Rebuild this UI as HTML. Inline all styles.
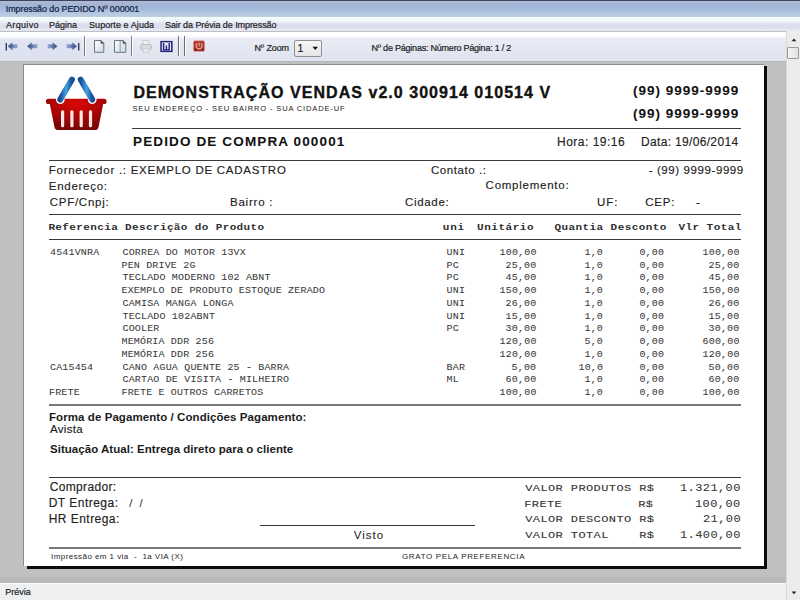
<!DOCTYPE html>
<html><head><meta charset="utf-8">
<style>
*{margin:0;padding:0;box-sizing:border-box}
html,body{width:800px;height:600px;overflow:hidden;background:#c0c0c0;font-family:"Liberation Sans",sans-serif;position:relative}
.t{position:absolute;white-space:pre;line-height:1}
.b{position:absolute}
.hl{position:absolute;height:1px;background:#3a3a3a}
</style></head><body>
<!-- title bar -->
<div class="b" style="left:0;top:0;width:800px;height:17px;background:linear-gradient(#3a4560 0,#3a4560 1px,#b0b9d6 1.5px,#a4b5d3 4px,#a2badf 9px,#b0c4e2 12px,#bccfe0 16.5px)"></div>
<div class="b" style="left:0;top:17px;width:800px;height:14px;background:linear-gradient(#f7fdfe 0,#eef4fb 30%,#dcdeee 55%,#dfe1f0 80%,#e9ebf3 100%)"></div>
<div class="b" style="left:0;top:31px;width:800px;height:1px;background:#bcc0c6"></div>
<!-- toolbar -->
<div class="b" style="left:0;top:32px;width:786px;height:29px;background:linear-gradient(#ffffff 0,#fbfcfd 16%,#e9ecf5 22%,#dfe3ef 100%)"></div>
<div class="b" style="left:0;top:61px;width:786px;height:1px;background:#b4b6bb"></div>
<div class="b" style="left:0;top:577px;width:786px;height:6px;background:#b9b9b9"></div>
<!-- scrollbar -->
<div class="b" style="left:786px;top:31px;width:14px;height:569px;background:#ececec;border-left:1px solid #d8d8d8"></div>
<!-- page shadow + page -->
<div class="b" style="left:763px;top:66px;width:4px;height:503px;background:#0c0c0c"></div>
<div class="b" style="left:27px;top:565px;width:740px;height:4px;background:#0c0c0c"></div>
<div class="b" style="left:23px;top:64px;width:741px;height:502px;background:#fff;border-left:1px solid #8c8c8c;border-top:1px solid #8c8c8c"></div>
<!-- status bar -->
<div class="b" style="left:0;top:583px;width:786px;height:17px;background:#eeeff1;border-top:1px solid #fbfbfb"></div>
<!-- lines -->
<div class="hl" style="left:132px;top:128px;width:609px"></div>
<div class="hl" style="left:49px;top:160px;width:692px"></div>
<div class="hl" style="left:49px;top:214px;width:692px"></div>
<div class="hl" style="left:49px;top:239px;width:692px"></div>
<div class="hl" style="left:49px;top:404px;width:692px;height:2px;background:#777"></div>
<div class="hl" style="left:49px;top:477px;width:692px"></div>
<div class="hl" style="left:260px;top:525px;width:215px"></div>
<div class="hl" style="left:49px;top:547px;width:692px;height:2px;background:#777"></div>

<div class="b" style="left:0;top:38.5px;width:81px;height:18px;background:#dcdff0;opacity:0.6"></div>
<!-- toolbar icons -->
<svg class="b" style="left:0;top:31px" width="786" height="30" viewBox="0 31 786 30">
 <defs>
  <linearGradient id="arrL" x1="0" y1="0" x2="1" y2="0"><stop offset="0" stop-color="#34447e"/><stop offset="0.45" stop-color="#5a70aa"/><stop offset="1" stop-color="#a6b6dc"/></linearGradient><linearGradient id="arrR" x1="1" y1="0" x2="0" y2="0"><stop offset="0" stop-color="#34447e"/><stop offset="0.45" stop-color="#5a70aa"/><stop offset="1" stop-color="#a6b6dc"/></linearGradient>
  <linearGradient id="pg" x1="0" y1="0" x2="1" y2="1"><stop offset="0" stop-color="#ffffff"/><stop offset="1" stop-color="#c9dbe6"/></linearGradient>
  <linearGradient id="pw" x1="0" y1="0" x2="0" y2="1"><stop offset="0" stop-color="#b04038"/><stop offset="1" stop-color="#8a2622"/></linearGradient>
 </defs>
 <!-- first -->
 <rect x="5.6" y="43" width="1.4" height="7.5" fill="#2c3a66"/>
 <path d="M8 46.3 L12.2 42.8 L12.2 44.8 L17 44.8 L17 47.8 L12.2 47.8 L12.2 49.8 Z" fill="url(#arrL)" stroke="#5a6ca0" stroke-width="0.5"/>
 <!-- prev -->
 <path d="M27.3 46.3 L31.7 42.8 L31.7 44.8 L37 44.8 L37 47.8 L31.7 47.8 L31.7 49.8 Z" fill="url(#arrL)" stroke="#5a6ca0" stroke-width="0.5"/>
 <!-- next -->
 <path d="M57.2 46.3 L52.8 42.8 L52.8 44.8 L48 44.8 L48 47.8 L52.8 47.8 L52.8 49.8 Z" fill="url(#arrR)" stroke="#5a6ca0" stroke-width="0.5"/>
 <!-- last -->
 <path d="M76.8 46.3 L72.4 42.8 L72.4 44.8 L67 44.8 L67 47.8 L72.4 47.8 L72.4 49.8 Z" fill="url(#arrR)" stroke="#5a6ca0" stroke-width="0.5"/>
 <rect x="78" y="43" width="1.4" height="7.5" fill="#2c3a66"/>
 <!-- separators -->
 <rect x="84" y="36" width="1" height="20" fill="#7a7d86"/><rect x="85" y="36" width="1" height="20" fill="#ffffff"/>
 <rect x="131" y="36" width="1" height="20" fill="#7a7d86"/><rect x="132" y="36" width="1" height="20" fill="#ffffff"/>
 <rect x="178" y="36" width="1" height="20" fill="#6a6d76"/><rect x="179" y="36" width="1" height="20" fill="#ffffff"/>
 <rect x="184" y="36" width="1" height="20" fill="#6a6d76"/><rect x="185" y="36" width="1" height="20" fill="#ffffff"/>
 <!-- one page -->
 <path d="M94.5 40.5 H101 L103.8 43.3 V52.3 H94.5 Z" fill="url(#pg)" stroke="#6d737c" stroke-width="1"/>
 <path d="M101 40.5 V43.3 H103.8" fill="#555" stroke="#555" stroke-width="0.8"/>
 <!-- two pages -->
 <path d="M114.5 40.5 H123 L125.8 43.3 V52.3 H114.5 Z" fill="url(#pg)" stroke="#6d737c" stroke-width="1"/>
 <path d="M123 40.5 V43.3 H125.8" fill="#555" stroke="#555" stroke-width="0.8"/>
 <rect x="119.6" y="41" width="1.2" height="11" fill="#9aaab4"/>
 <!-- printer disabled -->
 <rect x="143" y="40.5" width="6" height="4" fill="#eef0f2" stroke="#c4c7cc" stroke-width="0.8"/>
 <rect x="140.5" y="44.5" width="11" height="5" rx="1" fill="#d8dadf" stroke="#b4b7bd" stroke-width="0.8"/>
 <rect x="143" y="49" width="6" height="3" fill="#eef0f2" stroke="#c4c7cc" stroke-width="0.8"/>
 <!-- W -->
 <rect x="160.3" y="40.9" width="12.3" height="11.2" fill="#1e1e74"/>
 <rect x="161.8" y="42.3" width="9.3" height="8.4" fill="#e6e8fb"/>
 <path d="M163.6 43 V49.9 H169.2 V43 M166.4 45.6 V49.9" fill="none" stroke="#1e1e74" stroke-width="1.4"/>
 <!-- power -->
 <rect x="193.3" y="40.6" width="11.4" height="11" rx="1.6" fill="url(#pw)" stroke="#f0b4b0" stroke-width="0.7"/>
 <path d="M197.3 43.5 A3 3 0 1 0 200.9 43.5" fill="none" stroke="#f2a88e" stroke-width="1.3"/>
 <rect x="198.5" y="42.6" width="1.2" height="4" fill="#f2a88e"/>
</svg>
<!-- combo -->
<div class="b" style="left:294px;top:40px;width:28px;height:17px;border:1px solid #8d8f94;border-radius:2px;background:linear-gradient(#f7f7f7,#e4e4e4)"></div>
<svg class="b" style="left:312px;top:46px" width="7" height="5"><path d="M0.5 0.8 H6 L3.25 4 Z" fill="#111"/></svg>
<!-- scrollbar parts -->
<svg class="b" style="left:790px;top:37px" width="8" height="6"><path d="M1.6 4.2 L4 1.6 L6.4 4.2 Z" fill="#222"/></svg>
<div class="b" style="left:787px;top:47px;width:12px;height:12px;border:1px solid #9c9c9c;border-radius:1px;background:linear-gradient(90deg,#f4f4f4,#e2e2e2)"></div>
<svg class="b" style="left:790px;top:590px" width="8" height="6"><path d="M1.6 1.6 L4 4.2 L6.4 1.6 Z" fill="#222"/></svg>
<!-- logo -->
<svg class="b" style="left:40px;top:70px" width="72" height="66" viewBox="40 70 72 66">
 <defs>
  <linearGradient id="hb" x1="0" y1="0" x2="1" y2="0"><stop offset="0" stop-color="#1a4c98"/><stop offset="0.5" stop-color="#3fa6e0"/><stop offset="1" stop-color="#1a4c98"/></linearGradient>
  <radialGradient id="rb" cx="0.5" cy="0.15" r="0.8"><stop offset="0" stop-color="#dc0808"/><stop offset="0.5" stop-color="#ac0606"/><stop offset="1" stop-color="#7a0404"/></radialGradient>
 </defs>
 <line x1="71.9" y1="79.6" x2="60.3" y2="99.6" stroke="#fff" stroke-width="8.5" stroke-linecap="round"/>
 <line x1="80.7" y1="79.6" x2="92.2" y2="99.6" stroke="#fff" stroke-width="8.5" stroke-linecap="round"/>
 <path d="M48.5 98.8 H104 A2.6 2.6 0 0 1 104 104 H103.2 L98.5 127.2 Q97.9 130 95 130 H58 Q55.1 130 54.5 127.2 L49.8 104 H48.5 A2.6 2.6 0 0 1 48.5 98.8 Z" fill="url(#rb)"/>
 <line x1="71.9" y1="79.6" x2="60.3" y2="99.6" stroke="#fff" stroke-width="8.5" stroke-linecap="round" opacity="0"/>
 <circle cx="60.3" cy="99.6" r="4.4" fill="#fff"/>
 <circle cx="92.2" cy="99.6" r="4.4" fill="#fff"/>
 <line x1="71.9" y1="79.6" x2="60.3" y2="99.6" stroke="url(#hb)" stroke-width="6" stroke-linecap="round"/>
 <line x1="80.7" y1="79.6" x2="92.2" y2="99.6" stroke="url(#hb)" stroke-width="6" stroke-linecap="round"/>
 <rect x="61" y="110.2" width="3.2" height="17" rx="1.5" fill="#ffe6e6"/>
 <rect x="70.3" y="110.2" width="3.2" height="17" rx="1.5" fill="#ffe6e6"/>
 <rect x="79.6" y="110.2" width="3.2" height="17" rx="1.5" fill="#ffe6e6"/>
 <rect x="88.9" y="110.2" width="3.2" height="17" rx="1.5" fill="#ffe6e6"/>
</svg>
<div class="t" style="left:5.80px;top:4.50px;font-family:'Liberation Sans',sans-serif;font-size:9px;font-weight:400;letter-spacing:-0.100px;color:#15203a;-webkit-text-stroke:0.2px #15203a">Impressão do PEDIDO Nº 000001</div>
<div class="t" style="left:6.00px;top:20.50px;font-family:'Liberation Sans',sans-serif;font-size:9px;font-weight:400;letter-spacing:0.333px;color:#222;-webkit-text-stroke:0.2px #222">Arquivo</div>
<div class="t" style="left:49.00px;top:20.50px;font-family:'Liberation Sans',sans-serif;font-size:9px;font-weight:400;letter-spacing:0.000px;color:#222;-webkit-text-stroke:0.2px #222">Página</div>
<div class="t" style="left:89.00px;top:20.50px;font-family:'Liberation Sans',sans-serif;font-size:9px;font-weight:400;letter-spacing:0.071px;color:#222;-webkit-text-stroke:0.2px #222">Suporte e Ajuda</div>
<div class="t" style="left:165.00px;top:20.50px;font-family:'Liberation Sans',sans-serif;font-size:9px;font-weight:400;letter-spacing:-0.077px;color:#222;-webkit-text-stroke:0.2px #222">Sair da Prévia de Impressão</div>
<div class="t" style="left:254.50px;top:43.75px;font-family:'Liberation Sans',sans-serif;font-size:9px;font-weight:400;letter-spacing:-0.125px;color:#222;-webkit-text-stroke:0.2px #222">Nº Zoom</div>
<div class="t" style="left:297.50px;top:42.50px;font-family:'Liberation Sans',sans-serif;font-size:10.5px;font-weight:400;letter-spacing:0.000px;color:#111;-webkit-text-stroke:0.15px #111">1</div>
<div class="t" style="left:371.50px;top:43.75px;font-family:'Liberation Sans',sans-serif;font-size:9px;font-weight:400;letter-spacing:-0.221px;color:#222;-webkit-text-stroke:0.2px #222">Nº de Páginas: Número Página: 1 / 2</div>
<div class="t" style="left:5.25px;top:588.00px;font-family:'Liberation Sans',sans-serif;font-size:9px;font-weight:400;letter-spacing:0.000px;color:#222;-webkit-text-stroke:0.2px #222">Prévia</div>
<div class="t" style="left:133.40px;top:85.00px;font-family:'Liberation Sans',sans-serif;font-size:16px;font-weight:700;letter-spacing:1.041px;color:#111;-webkit-text-stroke:0.35px #111">DEMONSTRAÇÃO VENDAS v2.0 300914 010514 V</div>
<div class="t" style="left:132.50px;top:104.60px;font-family:'Liberation Sans',sans-serif;font-size:7.5px;font-weight:400;letter-spacing:0.863px;color:#222;-webkit-text-stroke:0px #222">SEU ENDEREÇO - SEU BAIRRO - SUA CIDADE-UF</div>
<div class="t" style="left:633.00px;top:84.40px;font-family:'Liberation Sans',sans-serif;font-size:13.5px;font-weight:700;letter-spacing:1.000px;color:#111;-webkit-text-stroke:0.05px #111">(99) 9999-9999</div>
<div class="t" style="left:633.00px;top:106.80px;font-family:'Liberation Sans',sans-serif;font-size:13.5px;font-weight:700;letter-spacing:1.000px;color:#111;-webkit-text-stroke:0.05px #111">(99) 9999-9999</div>
<div class="t" style="left:133.00px;top:134.70px;font-family:'Liberation Sans',sans-serif;font-size:13.5px;font-weight:700;letter-spacing:1.136px;color:#111;-webkit-text-stroke:0.05px #111">PEDIDO DE COMPRA 000001</div>
<div class="t" style="left:557.00px;top:136.20px;font-family:'Liberation Sans',sans-serif;font-size:12px;font-weight:400;letter-spacing:0.500px;color:#222;-webkit-text-stroke:0.15px #222">Hora: 19:16</div>
<div class="t" style="left:641.00px;top:136.20px;font-family:'Liberation Sans',sans-serif;font-size:12px;font-weight:400;letter-spacing:0.333px;color:#222;-webkit-text-stroke:0.15px #222">Data: 19/06/2014</div>
<div class="t" style="left:48.75px;top:164.60px;font-family:'Liberation Sans',sans-serif;font-size:11.5px;font-weight:400;letter-spacing:0.739px;color:#222;-webkit-text-stroke:0.15px #222">Fornecedor .: EXEMPLO DE CADASTRO</div>
<div class="t" style="left:431.00px;top:165.00px;font-family:'Liberation Sans',sans-serif;font-size:11.5px;font-weight:400;letter-spacing:0.556px;color:#222;-webkit-text-stroke:0.15px #222">Contato .:</div>
<div class="t" style="left:648.70px;top:164.60px;font-family:'Liberation Sans',sans-serif;font-size:11.5px;font-weight:400;letter-spacing:0.593px;color:#222;-webkit-text-stroke:0.15px #222">- (99) 9999-9999</div>
<div class="t" style="left:48.75px;top:180.60px;font-family:'Liberation Sans',sans-serif;font-size:11.5px;font-weight:400;letter-spacing:0.731px;color:#222;-webkit-text-stroke:0.15px #222">Endereço:</div>
<div class="t" style="left:485.60px;top:180.30px;font-family:'Liberation Sans',sans-serif;font-size:11.5px;font-weight:400;letter-spacing:0.745px;color:#222;-webkit-text-stroke:0.15px #222">Complemento:</div>
<div class="t" style="left:49.75px;top:197.00px;font-family:'Liberation Sans',sans-serif;font-size:11.5px;font-weight:400;letter-spacing:0.731px;color:#222;-webkit-text-stroke:0.15px #222">CPF/Cnpj:</div>
<div class="t" style="left:230.00px;top:197.00px;font-family:'Liberation Sans',sans-serif;font-size:11.5px;font-weight:400;letter-spacing:0.771px;color:#222;-webkit-text-stroke:0.15px #222">Bairro :</div>
<div class="t" style="left:405.00px;top:197.20px;font-family:'Liberation Sans',sans-serif;font-size:11.5px;font-weight:400;letter-spacing:0.667px;color:#222;-webkit-text-stroke:0.15px #222">Cidade:</div>
<div class="t" style="left:597.00px;top:197.20px;font-family:'Liberation Sans',sans-serif;font-size:11.5px;font-weight:400;letter-spacing:1.000px;color:#222;-webkit-text-stroke:0.15px #222">UF:</div>
<div class="t" style="left:645.30px;top:197.20px;font-family:'Liberation Sans',sans-serif;font-size:11.5px;font-weight:400;letter-spacing:0.733px;color:#222;-webkit-text-stroke:0.15px #222">CEP:</div>
<div class="t" style="left:696.00px;top:197.20px;font-family:'Liberation Sans',sans-serif;font-size:11.5px;font-weight:400;letter-spacing:0.000px;color:#222;-webkit-text-stroke:0.15px #222">-</div>
<div class="t" style="transform:scaleY(0.89);transform-origin:0 8px;left:48.40px;top:222.00px;font-family:'Liberation Mono',monospace;font-size:11px;font-weight:700;letter-spacing:0.370px;color:#2e2e2e;-webkit-text-stroke:0px #2e2e2e">Referencia Descrição do Produto</div>
<div class="t" style="transform:scaleY(0.89);transform-origin:0 8px;left:442.70px;top:222.00px;font-family:'Liberation Mono',monospace;font-size:11px;font-weight:700;letter-spacing:0.850px;color:#2e2e2e;-webkit-text-stroke:0px #2e2e2e">uni</div>
<div class="t" style="transform:scaleY(0.89);transform-origin:0 8px;left:477.00px;top:222.00px;font-family:'Liberation Mono',monospace;font-size:11px;font-weight:700;letter-spacing:0.543px;color:#2e2e2e;-webkit-text-stroke:0px #2e2e2e">Unitário</div>
<div class="t" style="transform:scaleY(0.89);transform-origin:0 8px;left:554.50px;top:222.00px;font-family:'Liberation Mono',monospace;font-size:11px;font-weight:700;letter-spacing:0.413px;color:#2e2e2e;-webkit-text-stroke:0px #2e2e2e">Quantia Desconto</div>
<div class="t" style="transform:scaleY(0.89);transform-origin:0 8px;left:678.40px;top:222.00px;font-family:'Liberation Mono',monospace;font-size:11px;font-weight:700;letter-spacing:0.450px;color:#2e2e2e;-webkit-text-stroke:0px #2e2e2e">Vlr Total</div>
<div class="t" style="transform:scaleY(0.94);transform-origin:0 7px;left:50.00px;top:248.00px;font-family:'Liberation Mono',monospace;font-size:10px;font-weight:400;letter-spacing:0.170px;color:#383838;-webkit-text-stroke:0.05px #383838">4541VNRA</div>
<div class="t" style="transform:scaleY(0.83);transform-origin:0 7px;left:122.50px;top:248.00px;font-family:'Liberation Mono',monospace;font-size:10px;font-weight:400;letter-spacing:0.170px;color:#383838;-webkit-text-stroke:0.05px #383838">CORREA DO MOTOR 13VX</div>
<div class="t" style="transform:scaleY(0.83);transform-origin:0 7px;left:446.60px;top:248.00px;font-family:'Liberation Mono',monospace;font-size:10px;font-weight:400;letter-spacing:0.170px;color:#383838;-webkit-text-stroke:0.05px #383838">UNI</div>
<div class="t" style="transform:scaleY(0.94);transform-origin:0 7px;left:499.60px;top:248.00px;font-family:'Liberation Mono',monospace;font-size:10px;font-weight:400;letter-spacing:0.170px;color:#383838;-webkit-text-stroke:0.05px #383838">100,00</div>
<div class="t" style="transform:scaleY(0.94);transform-origin:0 7px;left:584.50px;top:248.00px;font-family:'Liberation Mono',monospace;font-size:10px;font-weight:400;letter-spacing:0.170px;color:#383838;-webkit-text-stroke:0.05px #383838">1,0</div>
<div class="t" style="transform:scaleY(0.94);transform-origin:0 7px;left:639.40px;top:248.00px;font-family:'Liberation Mono',monospace;font-size:10px;font-weight:400;letter-spacing:0.170px;color:#383838;-webkit-text-stroke:0.05px #383838">0,00</div>
<div class="t" style="transform:scaleY(0.94);transform-origin:0 7px;left:702.60px;top:248.00px;font-family:'Liberation Mono',monospace;font-size:10px;font-weight:400;letter-spacing:0.170px;color:#383838;-webkit-text-stroke:0.05px #383838">100,00</div>
<div class="t" style="transform:scaleY(0.83);transform-origin:0 7px;left:121.50px;top:260.73px;font-family:'Liberation Mono',monospace;font-size:10px;font-weight:400;letter-spacing:0.170px;color:#383838;-webkit-text-stroke:0.05px #383838">PEN DRIVE 2G</div>
<div class="t" style="transform:scaleY(0.83);transform-origin:0 7px;left:446.60px;top:260.73px;font-family:'Liberation Mono',monospace;font-size:10px;font-weight:400;letter-spacing:0.170px;color:#383838;-webkit-text-stroke:0.05px #383838">PC</div>
<div class="t" style="transform:scaleY(0.94);transform-origin:0 7px;left:505.60px;top:260.73px;font-family:'Liberation Mono',monospace;font-size:10px;font-weight:400;letter-spacing:0.170px;color:#383838;-webkit-text-stroke:0.05px #383838">25,00</div>
<div class="t" style="transform:scaleY(0.94);transform-origin:0 7px;left:584.50px;top:260.73px;font-family:'Liberation Mono',monospace;font-size:10px;font-weight:400;letter-spacing:0.170px;color:#383838;-webkit-text-stroke:0.05px #383838">1,0</div>
<div class="t" style="transform:scaleY(0.94);transform-origin:0 7px;left:639.40px;top:260.73px;font-family:'Liberation Mono',monospace;font-size:10px;font-weight:400;letter-spacing:0.170px;color:#383838;-webkit-text-stroke:0.05px #383838">0,00</div>
<div class="t" style="transform:scaleY(0.94);transform-origin:0 7px;left:708.60px;top:260.73px;font-family:'Liberation Mono',monospace;font-size:10px;font-weight:400;letter-spacing:0.170px;color:#383838;-webkit-text-stroke:0.05px #383838">25,00</div>
<div class="t" style="transform:scaleY(0.83);transform-origin:0 7px;left:122.50px;top:273.46px;font-family:'Liberation Mono',monospace;font-size:10px;font-weight:400;letter-spacing:0.170px;color:#383838;-webkit-text-stroke:0.05px #383838">TECLADO MODERNO 102 ABNT</div>
<div class="t" style="transform:scaleY(0.83);transform-origin:0 7px;left:446.60px;top:273.46px;font-family:'Liberation Mono',monospace;font-size:10px;font-weight:400;letter-spacing:0.170px;color:#383838;-webkit-text-stroke:0.05px #383838">PC</div>
<div class="t" style="transform:scaleY(0.94);transform-origin:0 7px;left:505.60px;top:273.46px;font-family:'Liberation Mono',monospace;font-size:10px;font-weight:400;letter-spacing:0.170px;color:#383838;-webkit-text-stroke:0.05px #383838">45,00</div>
<div class="t" style="transform:scaleY(0.94);transform-origin:0 7px;left:584.50px;top:273.46px;font-family:'Liberation Mono',monospace;font-size:10px;font-weight:400;letter-spacing:0.170px;color:#383838;-webkit-text-stroke:0.05px #383838">1,0</div>
<div class="t" style="transform:scaleY(0.94);transform-origin:0 7px;left:639.40px;top:273.46px;font-family:'Liberation Mono',monospace;font-size:10px;font-weight:400;letter-spacing:0.170px;color:#383838;-webkit-text-stroke:0.05px #383838">0,00</div>
<div class="t" style="transform:scaleY(0.94);transform-origin:0 7px;left:708.60px;top:273.46px;font-family:'Liberation Mono',monospace;font-size:10px;font-weight:400;letter-spacing:0.170px;color:#383838;-webkit-text-stroke:0.05px #383838">45,00</div>
<div class="t" style="transform:scaleY(0.83);transform-origin:0 7px;left:121.50px;top:286.19px;font-family:'Liberation Mono',monospace;font-size:10px;font-weight:400;letter-spacing:0.170px;color:#383838;-webkit-text-stroke:0.05px #383838">EXEMPLO DE PRODUTO ESTOQUE ZERADO</div>
<div class="t" style="transform:scaleY(0.83);transform-origin:0 7px;left:446.60px;top:286.19px;font-family:'Liberation Mono',monospace;font-size:10px;font-weight:400;letter-spacing:0.170px;color:#383838;-webkit-text-stroke:0.05px #383838">UNI</div>
<div class="t" style="transform:scaleY(0.94);transform-origin:0 7px;left:499.60px;top:286.19px;font-family:'Liberation Mono',monospace;font-size:10px;font-weight:400;letter-spacing:0.170px;color:#383838;-webkit-text-stroke:0.05px #383838">150,00</div>
<div class="t" style="transform:scaleY(0.94);transform-origin:0 7px;left:584.50px;top:286.19px;font-family:'Liberation Mono',monospace;font-size:10px;font-weight:400;letter-spacing:0.170px;color:#383838;-webkit-text-stroke:0.05px #383838">1,0</div>
<div class="t" style="transform:scaleY(0.94);transform-origin:0 7px;left:639.40px;top:286.19px;font-family:'Liberation Mono',monospace;font-size:10px;font-weight:400;letter-spacing:0.170px;color:#383838;-webkit-text-stroke:0.05px #383838">0,00</div>
<div class="t" style="transform:scaleY(0.94);transform-origin:0 7px;left:702.60px;top:286.19px;font-family:'Liberation Mono',monospace;font-size:10px;font-weight:400;letter-spacing:0.170px;color:#383838;-webkit-text-stroke:0.05px #383838">150,00</div>
<div class="t" style="transform:scaleY(0.83);transform-origin:0 7px;left:122.50px;top:298.92px;font-family:'Liberation Mono',monospace;font-size:10px;font-weight:400;letter-spacing:0.170px;color:#383838;-webkit-text-stroke:0.05px #383838">CAMISA MANGA LONGA</div>
<div class="t" style="transform:scaleY(0.83);transform-origin:0 7px;left:446.60px;top:298.92px;font-family:'Liberation Mono',monospace;font-size:10px;font-weight:400;letter-spacing:0.170px;color:#383838;-webkit-text-stroke:0.05px #383838">UNI</div>
<div class="t" style="transform:scaleY(0.94);transform-origin:0 7px;left:505.60px;top:298.92px;font-family:'Liberation Mono',monospace;font-size:10px;font-weight:400;letter-spacing:0.170px;color:#383838;-webkit-text-stroke:0.05px #383838">26,00</div>
<div class="t" style="transform:scaleY(0.94);transform-origin:0 7px;left:584.50px;top:298.92px;font-family:'Liberation Mono',monospace;font-size:10px;font-weight:400;letter-spacing:0.170px;color:#383838;-webkit-text-stroke:0.05px #383838">1,0</div>
<div class="t" style="transform:scaleY(0.94);transform-origin:0 7px;left:639.40px;top:298.92px;font-family:'Liberation Mono',monospace;font-size:10px;font-weight:400;letter-spacing:0.170px;color:#383838;-webkit-text-stroke:0.05px #383838">0,00</div>
<div class="t" style="transform:scaleY(0.94);transform-origin:0 7px;left:708.60px;top:298.92px;font-family:'Liberation Mono',monospace;font-size:10px;font-weight:400;letter-spacing:0.170px;color:#383838;-webkit-text-stroke:0.05px #383838">26,00</div>
<div class="t" style="transform:scaleY(0.83);transform-origin:0 7px;left:122.50px;top:311.65px;font-family:'Liberation Mono',monospace;font-size:10px;font-weight:400;letter-spacing:0.170px;color:#383838;-webkit-text-stroke:0.05px #383838">TECLADO 102ABNT</div>
<div class="t" style="transform:scaleY(0.83);transform-origin:0 7px;left:446.60px;top:311.65px;font-family:'Liberation Mono',monospace;font-size:10px;font-weight:400;letter-spacing:0.170px;color:#383838;-webkit-text-stroke:0.05px #383838">UNI</div>
<div class="t" style="transform:scaleY(0.94);transform-origin:0 7px;left:505.60px;top:311.65px;font-family:'Liberation Mono',monospace;font-size:10px;font-weight:400;letter-spacing:0.170px;color:#383838;-webkit-text-stroke:0.05px #383838">15,00</div>
<div class="t" style="transform:scaleY(0.94);transform-origin:0 7px;left:584.50px;top:311.65px;font-family:'Liberation Mono',monospace;font-size:10px;font-weight:400;letter-spacing:0.170px;color:#383838;-webkit-text-stroke:0.05px #383838">1,0</div>
<div class="t" style="transform:scaleY(0.94);transform-origin:0 7px;left:639.40px;top:311.65px;font-family:'Liberation Mono',monospace;font-size:10px;font-weight:400;letter-spacing:0.170px;color:#383838;-webkit-text-stroke:0.05px #383838">0,00</div>
<div class="t" style="transform:scaleY(0.94);transform-origin:0 7px;left:708.60px;top:311.65px;font-family:'Liberation Mono',monospace;font-size:10px;font-weight:400;letter-spacing:0.170px;color:#383838;-webkit-text-stroke:0.05px #383838">15,00</div>
<div class="t" style="transform:scaleY(0.83);transform-origin:0 7px;left:122.50px;top:324.38px;font-family:'Liberation Mono',monospace;font-size:10px;font-weight:400;letter-spacing:0.170px;color:#383838;-webkit-text-stroke:0.05px #383838">COOLER</div>
<div class="t" style="transform:scaleY(0.83);transform-origin:0 7px;left:446.60px;top:324.38px;font-family:'Liberation Mono',monospace;font-size:10px;font-weight:400;letter-spacing:0.170px;color:#383838;-webkit-text-stroke:0.05px #383838">PC</div>
<div class="t" style="transform:scaleY(0.94);transform-origin:0 7px;left:505.60px;top:324.38px;font-family:'Liberation Mono',monospace;font-size:10px;font-weight:400;letter-spacing:0.170px;color:#383838;-webkit-text-stroke:0.05px #383838">30,00</div>
<div class="t" style="transform:scaleY(0.94);transform-origin:0 7px;left:584.50px;top:324.38px;font-family:'Liberation Mono',monospace;font-size:10px;font-weight:400;letter-spacing:0.170px;color:#383838;-webkit-text-stroke:0.05px #383838">1,0</div>
<div class="t" style="transform:scaleY(0.94);transform-origin:0 7px;left:639.40px;top:324.38px;font-family:'Liberation Mono',monospace;font-size:10px;font-weight:400;letter-spacing:0.170px;color:#383838;-webkit-text-stroke:0.05px #383838">0,00</div>
<div class="t" style="transform:scaleY(0.94);transform-origin:0 7px;left:708.60px;top:324.38px;font-family:'Liberation Mono',monospace;font-size:10px;font-weight:400;letter-spacing:0.170px;color:#383838;-webkit-text-stroke:0.05px #383838">30,00</div>
<div class="t" style="transform:scaleY(0.83);transform-origin:0 7px;left:121.50px;top:337.11px;font-family:'Liberation Mono',monospace;font-size:10px;font-weight:400;letter-spacing:0.170px;color:#383838;-webkit-text-stroke:0.05px #383838">MEMÓRIA DDR 256</div>
<div class="t" style="transform:scaleY(0.94);transform-origin:0 7px;left:499.60px;top:337.11px;font-family:'Liberation Mono',monospace;font-size:10px;font-weight:400;letter-spacing:0.170px;color:#383838;-webkit-text-stroke:0.05px #383838">120,00</div>
<div class="t" style="transform:scaleY(0.94);transform-origin:0 7px;left:584.50px;top:337.11px;font-family:'Liberation Mono',monospace;font-size:10px;font-weight:400;letter-spacing:0.170px;color:#383838;-webkit-text-stroke:0.05px #383838">5,0</div>
<div class="t" style="transform:scaleY(0.94);transform-origin:0 7px;left:639.40px;top:337.11px;font-family:'Liberation Mono',monospace;font-size:10px;font-weight:400;letter-spacing:0.170px;color:#383838;-webkit-text-stroke:0.05px #383838">0,00</div>
<div class="t" style="transform:scaleY(0.94);transform-origin:0 7px;left:702.60px;top:337.11px;font-family:'Liberation Mono',monospace;font-size:10px;font-weight:400;letter-spacing:0.170px;color:#383838;-webkit-text-stroke:0.05px #383838">600,00</div>
<div class="t" style="transform:scaleY(0.83);transform-origin:0 7px;left:121.50px;top:349.84px;font-family:'Liberation Mono',monospace;font-size:10px;font-weight:400;letter-spacing:0.170px;color:#383838;-webkit-text-stroke:0.05px #383838">MEMÓRIA DDR 256</div>
<div class="t" style="transform:scaleY(0.94);transform-origin:0 7px;left:499.60px;top:349.84px;font-family:'Liberation Mono',monospace;font-size:10px;font-weight:400;letter-spacing:0.170px;color:#383838;-webkit-text-stroke:0.05px #383838">120,00</div>
<div class="t" style="transform:scaleY(0.94);transform-origin:0 7px;left:584.50px;top:349.84px;font-family:'Liberation Mono',monospace;font-size:10px;font-weight:400;letter-spacing:0.170px;color:#383838;-webkit-text-stroke:0.05px #383838">1,0</div>
<div class="t" style="transform:scaleY(0.94);transform-origin:0 7px;left:639.40px;top:349.84px;font-family:'Liberation Mono',monospace;font-size:10px;font-weight:400;letter-spacing:0.170px;color:#383838;-webkit-text-stroke:0.05px #383838">0,00</div>
<div class="t" style="transform:scaleY(0.94);transform-origin:0 7px;left:702.60px;top:349.84px;font-family:'Liberation Mono',monospace;font-size:10px;font-weight:400;letter-spacing:0.170px;color:#383838;-webkit-text-stroke:0.05px #383838">120,00</div>
<div class="t" style="transform:scaleY(0.83);transform-origin:0 7px;left:50.00px;top:362.57px;font-family:'Liberation Mono',monospace;font-size:10px;font-weight:400;letter-spacing:0.170px;color:#383838;-webkit-text-stroke:0.05px #383838">CA15454</div>
<div class="t" style="transform:scaleY(0.83);transform-origin:0 7px;left:122.50px;top:362.57px;font-family:'Liberation Mono',monospace;font-size:10px;font-weight:400;letter-spacing:0.170px;color:#383838;-webkit-text-stroke:0.05px #383838">CANO AGUA QUENTE 25 - BARRA</div>
<div class="t" style="transform:scaleY(0.83);transform-origin:0 7px;left:446.60px;top:362.57px;font-family:'Liberation Mono',monospace;font-size:10px;font-weight:400;letter-spacing:0.170px;color:#383838;-webkit-text-stroke:0.05px #383838">BAR</div>
<div class="t" style="transform:scaleY(0.94);transform-origin:0 7px;left:511.60px;top:362.57px;font-family:'Liberation Mono',monospace;font-size:10px;font-weight:400;letter-spacing:0.170px;color:#383838;-webkit-text-stroke:0.05px #383838">5,00</div>
<div class="t" style="transform:scaleY(0.94);transform-origin:0 7px;left:578.50px;top:362.57px;font-family:'Liberation Mono',monospace;font-size:10px;font-weight:400;letter-spacing:0.170px;color:#383838;-webkit-text-stroke:0.05px #383838">10,0</div>
<div class="t" style="transform:scaleY(0.94);transform-origin:0 7px;left:639.40px;top:362.57px;font-family:'Liberation Mono',monospace;font-size:10px;font-weight:400;letter-spacing:0.170px;color:#383838;-webkit-text-stroke:0.05px #383838">0,00</div>
<div class="t" style="transform:scaleY(0.94);transform-origin:0 7px;left:708.60px;top:362.57px;font-family:'Liberation Mono',monospace;font-size:10px;font-weight:400;letter-spacing:0.170px;color:#383838;-webkit-text-stroke:0.05px #383838">50,00</div>
<div class="t" style="transform:scaleY(0.83);transform-origin:0 7px;left:122.50px;top:375.30px;font-family:'Liberation Mono',monospace;font-size:10px;font-weight:400;letter-spacing:0.170px;color:#383838;-webkit-text-stroke:0.05px #383838">CARTAO DE VISITA - MILHEIRO</div>
<div class="t" style="transform:scaleY(0.83);transform-origin:0 7px;left:446.60px;top:375.30px;font-family:'Liberation Mono',monospace;font-size:10px;font-weight:400;letter-spacing:0.170px;color:#383838;-webkit-text-stroke:0.05px #383838">ML</div>
<div class="t" style="transform:scaleY(0.94);transform-origin:0 7px;left:505.60px;top:375.30px;font-family:'Liberation Mono',monospace;font-size:10px;font-weight:400;letter-spacing:0.170px;color:#383838;-webkit-text-stroke:0.05px #383838">60,00</div>
<div class="t" style="transform:scaleY(0.94);transform-origin:0 7px;left:584.50px;top:375.30px;font-family:'Liberation Mono',monospace;font-size:10px;font-weight:400;letter-spacing:0.170px;color:#383838;-webkit-text-stroke:0.05px #383838">1,0</div>
<div class="t" style="transform:scaleY(0.94);transform-origin:0 7px;left:639.40px;top:375.30px;font-family:'Liberation Mono',monospace;font-size:10px;font-weight:400;letter-spacing:0.170px;color:#383838;-webkit-text-stroke:0.05px #383838">0,00</div>
<div class="t" style="transform:scaleY(0.94);transform-origin:0 7px;left:708.60px;top:375.30px;font-family:'Liberation Mono',monospace;font-size:10px;font-weight:400;letter-spacing:0.170px;color:#383838;-webkit-text-stroke:0.05px #383838">60,00</div>
<div class="t" style="transform:scaleY(0.83);transform-origin:0 7px;left:49.00px;top:388.03px;font-family:'Liberation Mono',monospace;font-size:10px;font-weight:400;letter-spacing:0.170px;color:#383838;-webkit-text-stroke:0.05px #383838">FRETE</div>
<div class="t" style="transform:scaleY(0.83);transform-origin:0 7px;left:121.50px;top:388.03px;font-family:'Liberation Mono',monospace;font-size:10px;font-weight:400;letter-spacing:0.170px;color:#383838;-webkit-text-stroke:0.05px #383838">FRETE E OUTROS CARRETOS</div>
<div class="t" style="transform:scaleY(0.94);transform-origin:0 7px;left:499.60px;top:388.03px;font-family:'Liberation Mono',monospace;font-size:10px;font-weight:400;letter-spacing:0.170px;color:#383838;-webkit-text-stroke:0.05px #383838">100,00</div>
<div class="t" style="transform:scaleY(0.94);transform-origin:0 7px;left:584.50px;top:388.03px;font-family:'Liberation Mono',monospace;font-size:10px;font-weight:400;letter-spacing:0.170px;color:#383838;-webkit-text-stroke:0.05px #383838">1,0</div>
<div class="t" style="transform:scaleY(0.94);transform-origin:0 7px;left:639.40px;top:388.03px;font-family:'Liberation Mono',monospace;font-size:10px;font-weight:400;letter-spacing:0.170px;color:#383838;-webkit-text-stroke:0.05px #383838">0,00</div>
<div class="t" style="transform:scaleY(0.94);transform-origin:0 7px;left:702.60px;top:388.03px;font-family:'Liberation Mono',monospace;font-size:10px;font-weight:400;letter-spacing:0.170px;color:#383838;-webkit-text-stroke:0.05px #383838">100,00</div>
<div class="t" style="left:49.00px;top:411.80px;font-family:'Liberation Sans',sans-serif;font-size:11.5px;font-weight:700;letter-spacing:0.075px;color:#1c1c1c;-webkit-text-stroke:0px #1c1c1c">Forma de Pagamento / Condições Pagamento:</div>
<div class="t" style="left:50.00px;top:424.30px;font-family:'Liberation Sans',sans-serif;font-size:11.5px;font-weight:400;letter-spacing:0.300px;color:#222;-webkit-text-stroke:0.15px #222">Avista</div>
<div class="t" style="left:50.00px;top:444.30px;font-family:'Liberation Sans',sans-serif;font-size:11.5px;font-weight:700;letter-spacing:0.034px;color:#1c1c1c;-webkit-text-stroke:0px #1c1c1c">Situação Atual: Entrega direto para o cliente</div>
<div class="t" style="left:49.70px;top:480.80px;font-family:'Liberation Sans',sans-serif;font-size:12px;font-weight:400;letter-spacing:0.344px;color:#222;-webkit-text-stroke:0.15px #222">Comprador:</div>
<div class="t" style="left:48.70px;top:497.00px;font-family:'Liberation Sans',sans-serif;font-size:12px;font-weight:400;letter-spacing:0.480px;color:#222;-webkit-text-stroke:0.15px #222">DT Entrega:</div>
<div class="t" style="left:129.20px;top:498.20px;font-family:'Liberation Sans',sans-serif;font-size:11.5px;font-weight:400;letter-spacing:0.267px;color:#444;-webkit-text-stroke:0.15px #444">/  /</div>
<div class="t" style="left:48.70px;top:512.50px;font-family:'Liberation Sans',sans-serif;font-size:12px;font-weight:400;letter-spacing:0.460px;color:#222;-webkit-text-stroke:0.15px #222">HR Entrega:</div>
<div class="t" style="left:353.80px;top:529.50px;font-family:'Liberation Sans',sans-serif;font-size:11.5px;font-weight:400;letter-spacing:1.000px;color:#222;-webkit-text-stroke:0.05px #222">Visto</div>
<div class="t" style="left:51.00px;top:553.00px;font-family:'Liberation Sans',sans-serif;font-size:8px;font-weight:400;letter-spacing:0.438px;color:#262626;-webkit-text-stroke:0px #262626">Impressão em 1 via  -  1a VIA (X)</div>
<div class="t" style="left:402.00px;top:552.60px;font-family:'Liberation Sans',sans-serif;font-size:8px;font-weight:400;letter-spacing:0.638px;color:#262626;-webkit-text-stroke:0px #262626">GRATO PELA PREFERENCIA</div>
<div class="t" style="transform:scaleY(0.8);transform-origin:0 9px;left:525.20px;top:481.80px;font-family:'Liberation Mono',monospace;font-size:12px;font-weight:400;letter-spacing:0.400px;color:#333;-webkit-text-stroke:0.1px #333">VALOR PRODUTOS R$</div>
<div class="t" style="transform:scaleY(0.89);transform-origin:0 9px;left:680.00px;top:481.80px;font-family:'Liberation Mono',monospace;font-size:12px;font-weight:400;letter-spacing:0.400px;color:#333;-webkit-text-stroke:0.05px #333">1.321,00</div>
<div class="t" style="transform:scaleY(0.8);transform-origin:0 9px;left:524.20px;top:497.63px;font-family:'Liberation Mono',monospace;font-size:12px;font-weight:400;letter-spacing:0.400px;color:#333;-webkit-text-stroke:0.1px #333">FRETE          R$</div>
<div class="t" style="transform:scaleY(0.89);transform-origin:0 9px;left:695.00px;top:497.63px;font-family:'Liberation Mono',monospace;font-size:12px;font-weight:400;letter-spacing:0.400px;color:#333;-webkit-text-stroke:0.05px #333">100,00</div>
<div class="t" style="transform:scaleY(0.8);transform-origin:0 9px;left:525.20px;top:513.46px;font-family:'Liberation Mono',monospace;font-size:12px;font-weight:400;letter-spacing:0.400px;color:#333;-webkit-text-stroke:0.1px #333">VALOR DESCONTO R$</div>
<div class="t" style="transform:scaleY(0.89);transform-origin:0 9px;left:703.00px;top:513.46px;font-family:'Liberation Mono',monospace;font-size:12px;font-weight:400;letter-spacing:0.400px;color:#333;-webkit-text-stroke:0.05px #333">21,00</div>
<div class="t" style="transform:scaleY(0.8);transform-origin:0 9px;left:525.20px;top:529.29px;font-family:'Liberation Mono',monospace;font-size:12px;font-weight:400;letter-spacing:0.400px;color:#333;-webkit-text-stroke:0.1px #333">VALOR TOTAL    R$</div>
<div class="t" style="transform:scaleY(0.89);transform-origin:0 9px;left:680.00px;top:529.29px;font-family:'Liberation Mono',monospace;font-size:12px;font-weight:400;letter-spacing:0.400px;color:#333;-webkit-text-stroke:0.05px #333">1.400,00</div>
</body></html>
